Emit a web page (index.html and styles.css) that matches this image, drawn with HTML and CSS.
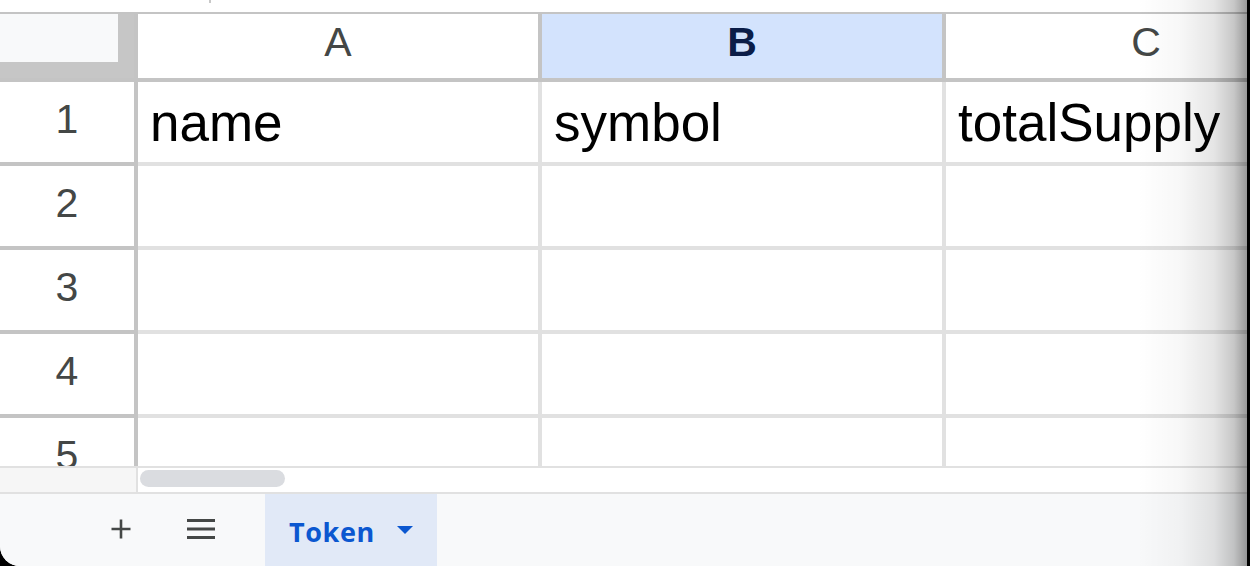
FILE: index.html
```html
<!DOCTYPE html>
<html lang="en">
<head>
<meta charset="utf-8">
<title>Token - Sheet</title>
<link rel="stylesheet" href="styles.css">
</head>
<body>
<div class="window">
  <div class="topstrip"><span class="tick"></span></div>
  <div class="grid">
    <div class="corner"><div class="corner-box"></div></div>
    <div class="colhead">A</div>
    <div class="colhead selected">B</div>
    <div class="colhead">C</div>

    <div class="rowhead">1</div>
    <div class="cell">name</div>
    <div class="cell">symbol</div>
    <div class="cell">totalSupply</div>

    <div class="rowhead">2</div>
    <div class="cell"></div>
    <div class="cell"></div>
    <div class="cell"></div>

    <div class="rowhead">3</div>
    <div class="cell"></div>
    <div class="cell"></div>
    <div class="cell"></div>

    <div class="rowhead">4</div>
    <div class="cell"></div>
    <div class="cell"></div>
    <div class="cell"></div>

    <div class="rowhead partial">5</div>
    <div class="cell partial"></div>
    <div class="cell partial"></div>
    <div class="cell partial"></div>
  </div>
  <div class="hscroll">
    <div class="hscroll-left"></div>
    <div class="hscroll-track"><div class="thumb"></div></div>
  </div>
  <div class="tabbar">
    <button class="iconbtn" aria-label="Add sheet">
      <svg width="22" height="22" viewBox="0 0 22 22"><path d="M11 1.5v19M1.5 11h19" stroke="#444746" stroke-width="2.6" fill="none"/></svg>
    </button>
    <button class="iconbtn" aria-label="All sheets">
      <svg width="28" height="22" viewBox="0 0 28 22"><path d="M0 2.5h28M0 11h28M0 19.5h28" stroke="#444746" stroke-width="2.8" fill="none"/></svg>
    </button>
    <div class="tab">
      <span class="tab-name">Token</span>
      <svg class="caret" width="16" height="8" viewBox="0 0 16 8"><path d="M0 0h16L8 8z" fill="#0b57d0"/></svg>
    </div>
  </div>
  <div class="edge-shadow"></div>
</div>
</body>
</html>
```
FILE: styles.css
```css
html, body {
  margin: 0;
  padding: 0;
  background: #000;
}
.window {
  position: relative;
  width: 1247px;
  height: 566px;
  background: #fff;
  border-bottom-left-radius: 20px;
  overflow: hidden;
  font-family: "Liberation Sans", Arial, sans-serif;
}
.topstrip {
  height: 12px;
  border-bottom: 2px solid #c4c4c4;
  padding-left: 209px;
}
.tick {
  display: block;
  width: 2px;
  height: 3px;
  background: #c8c8c8;
}
.grid {
  display: grid;
  grid-template-columns: 138px 404px 404px 404px;
  grid-template-rows: 68px 84px 84px 84px 84px 48px;
}
.grid > div {
  box-sizing: border-box;
  overflow: hidden;
}
.corner {
  background: #c6c6c6;
  border-right: 4px solid #c4c4c4;
  border-bottom: 4px solid #c4c4c4;
}
.corner-box {
  width: 118px;
  height: 48px;
  background: #f8f9fa;
}
.colhead {
  border-right: 4px solid #c4c4c4;
  border-bottom: 4px solid #c4c4c4;
  text-align: center;
  font-size: 41px;
  line-height: 41px;
  padding-top: 8px;
  color: #444746;
}
.colhead.selected {
  background: #d3e3fd;
  color: #0b1d48;
  font-weight: bold;
}
.rowhead {
  border-right: 4px solid #c4c4c4;
  border-bottom: 4px solid #c4c4c4;
  text-align: center;
  font-size: 41px;
  line-height: 41px;
  padding-top: 17px;
  color: #444746;
}
.cell {
  border-right: 4px solid #e1e1e1;
  border-bottom: 4px solid #e1e1e1;
  font-size: 53px;
  line-height: 53px;
  padding: 14px 0 0 12px;
  color: #000;
  white-space: nowrap;
}
.grid > .partial {
  border-bottom: none;
}
.hscroll {
  display: flex;
  height: 24px;
  border-top: 2px solid #e1e1e1;
  border-bottom: 2px solid #e1e1e1;
}
.hscroll-left {
  width: 136px;
  background: #f6f6f6;
  border-right: 2px solid #e1e1e1;
}
.hscroll-track {
  flex: 1;
  padding: 2px 0 0 2px;
}
.thumb {
  width: 145px;
  height: 17px;
  border-radius: 9px;
  background: #dadce0;
}
.tabbar {
  display: flex;
  align-items: stretch;
  height: 72px;
  background: #f8f9fa;
  padding-left: 101px;
}
.iconbtn {
  width: 40px;
  margin: 0 40px 0 0;
  padding: 0;
  border: none;
  background: transparent;
  display: flex;
  align-items: center;
  justify-content: center;
}
.iconbtn + .iconbtn {
  margin-right: 44px;
}
.iconbtn svg {
  display: block;
  margin-top: -2px;
}
.tab {
  display: flex;
  align-items: center;
  width: 172px;
  box-sizing: border-box;
  padding: 0 24px 0 24px;
  background: #e1e9f7;
}
.tab-name {
  font-family: "Open Sans", "Liberation Sans", sans-serif;
  font-weight: 700;
  font-size: 27px;
  letter-spacing: 0.6px;
  color: #0b57d0;
  margin-top: 2px;
}
.caret {
  margin-left: auto;
  display: block;
  margin-top: -1px;
}
.edge-shadow {
  position: absolute;
  top: 0;
  right: 0;
  bottom: 0;
  width: 110px;
  pointer-events: none;
  background: linear-gradient(to right,
    rgba(0,0,0,0) 0%,
    rgba(0,0,0,0.03) 40%,
    rgba(0,0,0,0.10) 70%,
    rgba(0,0,0,0.22) 88%,
    rgba(0,0,0,0.40) 100%);
}
```
